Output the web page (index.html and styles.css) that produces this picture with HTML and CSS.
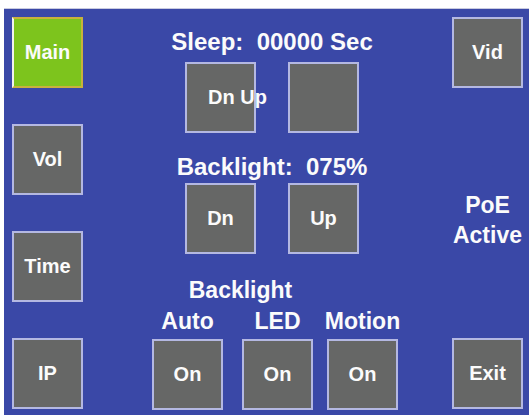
FILE: index.html
```html
<!DOCTYPE html>
<html lang="en">
  <head>
    <meta charset="utf-8"/>
    <title>Panel - Main</title>
    <link rel="stylesheet" href="styles.css">
  </head>
  <body>
    <div class="panel">
      <div class="side">
        <div class="btn active">Main</div>
        <div class="btn">Vol</div>
        <div class="btn">Time</div>
        <div class="btn">IP</div>
      </div>

      <div class="middle">
        <div class="heading sleep">Sleep:&nbsp; 00000 Sec</div>
        <div class="pair">
          <div class="btn left">Dn Up</div>
          <div class="btn"></div>
        </div>

        <div class="heading light">Backlight:&nbsp; 075%</div>
        <div class="pair">
          <div class="btn">Dn</div>
          <div class="btn">Up</div>
        </div>

        <div class="modes">
          <div class="label span2">Backlight</div>
          <div class="mode">
            <div class="label">Auto</div>
            <div class="btn">On</div>
          </div>
          <div class="mode">
            <div class="label">LED</div>
            <div class="btn">On</div>
          </div>
          <div class="mode">
            <div class="label">Motion</div>
            <div class="btn">On</div>
          </div>
        </div>
      </div>

      <div class="side">
        <div class="btn">Vid</div>
        <div class="status">PoE<br/>Active</div>
        <div class="btn">Exit</div>
      </div>
    </div>
  </body>
</html>
```

FILE: styles.css
```css
html, body {
  margin: 0;
  height: 100%;
  overflow: hidden;
}
body {
  background-color: #ffffff;
  font-family: "Liberation Sans", Arial, sans-serif;
  font-weight: bold;
  color: #fbfbfb;
}
.panel {
  box-sizing: border-box;
  width: 525px;
  height: 407px;
  margin: 8px 0 0 4px;
  padding: 8px 6px 6px 8px;
  background-color: #3a48a7;
  border-top: solid 1px #c9cbe0;
  display: flex;
}
.side {
  width: 71px;
  display: flex;
  flex-direction: column;
  justify-content: space-between;
}
.btn {
  box-sizing: border-box;
  width: 71px;
  height: 71px;
  background-color: #666766;
  border: solid 2px #b4b8e2;
  font-size: 20px;
  display: flex;
  align-items: center;
  justify-content: center;
  white-space: nowrap;
}
.btn.active {
  background-color: #7dc41d;
  border-color: #c8b23c;
  border-left-color: #f2f2ee;
}
.btn.left {
  justify-content: flex-start;
  padding-left: 21px;
}
.middle {
  flex: 1;
  padding-left: 9px;
}
.heading {
  font-size: 24px;
  line-height: 28px;
  text-align: center;
}
.sleep {
  margin-top: 11px;
}
.light {
  margin-top: 20px;
}
.pair {
  display: flex;
  justify-content: center;
  gap: 32px;
  margin-top: 6px;
}
.light + .pair {
  margin-top: 2px;
}
.modes {
  display: grid;
  grid-template-columns: 90px 85px 71px;
  margin: 22px 0 0 60px;
}
.label {
  font-size: 23px;
  line-height: 28px;
  display: flex;
  justify-content: center;
  white-space: nowrap;
}
.span2 {
  grid-row: 1;
  grid-column: 1 / 3;
  padding-left: 2px;
}
.mode {
  grid-row: 2;
  width: 71px;
}
.mode .label {
  margin: 3px 0 4px;
}
.status {
  font-size: 23px;
  line-height: 30px;
  text-align: center;
  margin-top: 13px;
}
```
